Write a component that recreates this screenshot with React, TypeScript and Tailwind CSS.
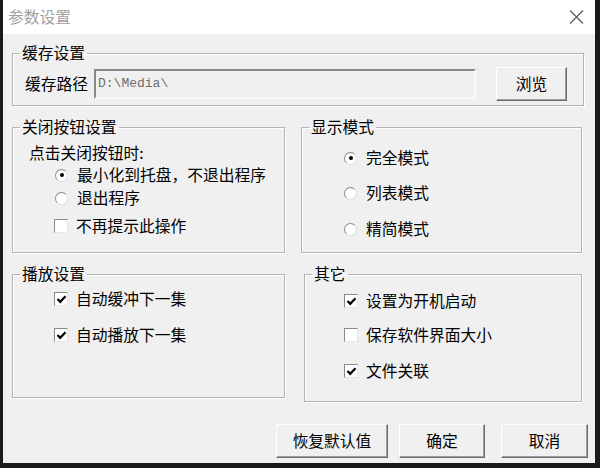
import type { ReactNode } from 'react';

const font = { fontFamily: '"Noto Sans CJK SC", "Liberation Sans", sans-serif' };

function Radio({ checked }: { checked?: boolean }) {
  return (
    <span className="relative flex h-[13px] w-[13px] shrink-0 items-center justify-center rounded-full border border-t-[#8a8a8a] border-l-[#8a8a8a] border-r-[#dcdcdc] border-b-[#dcdcdc] bg-white">
      {checked && <span className="h-[4px] w-[4px] rounded-full bg-black" />}
    </span>
  );
}

function Check({ checked }: { checked?: boolean }) {
  return (
    <span className="flex h-[14px] w-[14px] shrink-0 items-center justify-center border border-t-[#8a8a8a] border-l-[#8a8a8a] border-r-[#e6e6e6] border-b-[#e6e6e6] bg-white">
      {checked && (
        <svg width="11" height="11" viewBox="0 0 11 11">
          <path d="M1.5 5 L4.2 7.8 L9.5 2.2" fill="none" stroke="#000" strokeWidth="2.2" />
        </svg>
      )}
    </span>
  );
}

function Option({ kind, checked, label, className }: { kind: 'radio' | 'check'; checked?: boolean; label: string; className?: string }) {
  return (
    <div className={`flex h-[18px] items-center ${className ?? ''}`}>
      {kind === 'radio' ? <Radio checked={checked} /> : <Check checked={checked} />}
      <span className={kind === 'radio' ? 'ml-[9px]' : 'ml-[8px]'}>{label}</span>
    </div>
  );
}

function Group({ title, className, children }: { title: string; className?: string; children: ReactNode }) {
  return (
    <fieldset className={`border border-[#b4b4b4] shadow-[inset_1px_1px_0_#fff,1px_1px_0_#fff] ${className ?? ''}`}>
      <legend className="ml-[7px] px-[2px] leading-[18px]">{title}</legend>
      {children}
    </fieldset>
  );
}

function Button({ label, className }: { label: string; className?: string }) {
  return (
    <button className={`flex h-[34px] items-center justify-center border border-t-white border-l-white border-r-[#6a6a6a] border-b-[#6a6a6a] bg-[#f0f0f0] shadow-[inset_-1px_-1px_0_#a0a0a0] ${className ?? ''}`}>
      {label}
    </button>
  );
}

export default function App() {
  return (
    <div style={font} className="relative h-[468px] w-[600px] overflow-hidden bg-[#1a1a1a] text-[15.75px] text-black">
      <div className="flex h-[463px] w-[595px] flex-col border-l-[3px] border-[#1a1a1a] bg-[#f0f0f0]">
        {/* title bar */}
        <div className="flex h-[34px] items-center justify-between bg-white pl-[5px] pr-[11px]">
          <span className="text-[#a0a0a0]">参数设置</span>
          <svg width="15" height="14" viewBox="0 0 15 14">
            <path d="M1 0.5 L14 13.5 M14 0.5 L1 13.5" stroke="#555" strokeWidth="1.1" />
          </svg>
        </div>

        {/* cache */}
        <Group title="缓存设置" className="ml-[9px] mt-[10px] h-[62px] w-[572px]">
          <div className="mt-[5px] flex items-center">
            <span className="ml-[12px]">缓存路径</span>
            <div className="ml-[6px] flex h-[30px] w-[382px] items-center border-2 border-t-[#8a8a8a] border-l-[#8a8a8a] border-r-[#fafafa] border-b-[#fafafa] bg-[#f0f0f0] pl-[2px] text-[13px] text-[#6d6d6d]" style={{ fontFamily: '"Liberation Mono", monospace' }}>
              D:\Media\
            </div>
            <Button label="浏览" className="ml-[20px] h-[31px] w-[71px]" />
          </div>
        </Group>

        <div className="mt-[12px] flex items-start">
          <Group title="关闭按钮设置" className="ml-[9px] h-[135px] w-[273px]">
            <div className="ml-[16px] mt-[8px] h-[18px] leading-[18px]">点击关闭按钮时:</div>
            <Option kind="radio" checked label="最小化到托盘，不退出程序" className="ml-[42px] mt-[4px]" />
            <Option kind="radio" label="退出程序" className="ml-[42px] mt-[5px]" />
            <Option kind="check" label="不再提示此操作" className="ml-[41px] mt-[10px]" />
          </Group>
          <Group title="显示模式" className="ml-[16px] h-[135px] w-[281px]">
            <Option kind="radio" checked label="完全模式" className="ml-[42px] mt-[13px]" />
            <Option kind="radio" label="列表模式" className="ml-[42px] mt-[17px]" />
            <Option kind="radio" label="精简模式" className="ml-[42px] mt-[18px]" />
          </Group>
        </div>

        <div className="mt-[12px] flex items-start">
          <Group title="播放设置" className="ml-[9px] h-[133px] w-[273px]">
            <Option kind="check" checked label="自动缓冲下一集" className="ml-[41px] mt-[7px]" />
            <Option kind="check" checked label="自动播放下一集" className="ml-[41px] mt-[18px]" />
          </Group>
          <Group title="其它" className="ml-[19px] h-[137px] w-[278px]">
            <Option kind="check" checked label="设置为开机启动" className="ml-[39px] mt-[9px]" />
            <Option kind="check" label="保存软件界面大小" className="ml-[39px] mt-[16px]" />
            <Option kind="check" checked label="文件关联" className="ml-[39px] mt-[18px]" />
          </Group>
        </div>

        <div className="mt-[22px] flex justify-end pr-[7px]">
          <Button label="恢复默认值" className="w-[112px]" />
          <Button label="确定" className="ml-[11px] w-[86px]" />
          <Button label="取消" className="ml-[16px] w-[87px]" />
        </div>
      </div>
    </div>
  );
}
